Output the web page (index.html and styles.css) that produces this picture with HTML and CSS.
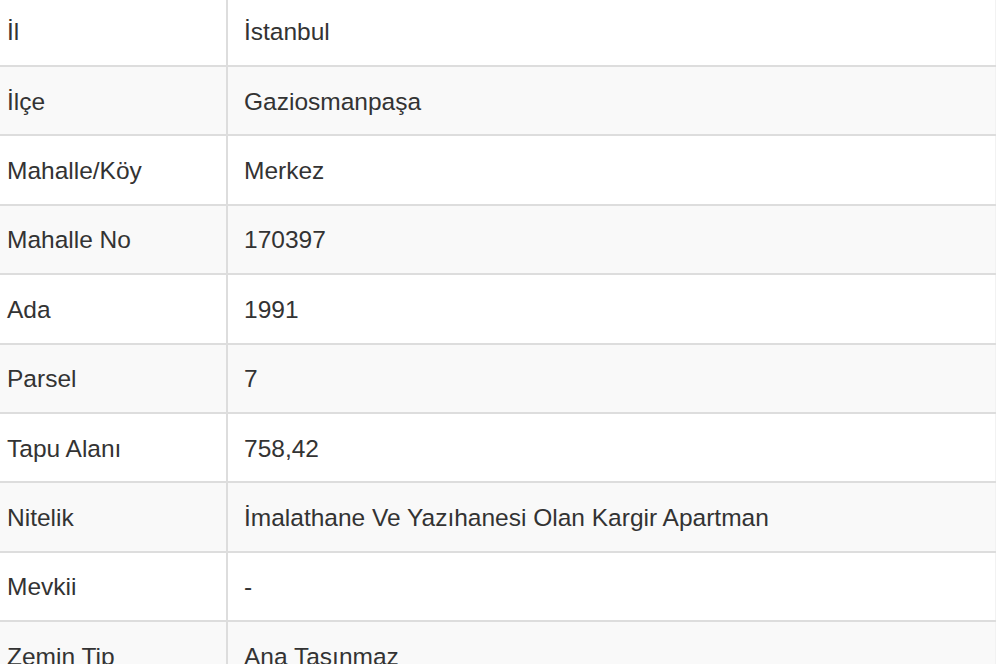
FILE: index.html
```html
<!DOCTYPE html>
<html lang="tr">
<head>
<meta charset="utf-8">
<link rel="stylesheet" href="styles.css">
</head>
<body>
<table class="info">
  <tbody>
    <tr><td class="key">İl</td><td class="val">İstanbul</td></tr>
    <tr><td class="key">İlçe</td><td class="val">Gaziosmanpaşa</td></tr>
    <tr><td class="key">Mahalle/Köy</td><td class="val">Merkez</td></tr>
    <tr><td class="key">Mahalle No</td><td class="val">170397</td></tr>
    <tr><td class="key">Ada</td><td class="val">1991</td></tr>
    <tr><td class="key">Parsel</td><td class="val">7</td></tr>
    <tr><td class="key">Tapu Alanı</td><td class="val">758,42</td></tr>
    <tr><td class="key">Nitelik</td><td class="val">İmalathane Ve Yazıhanesi Olan Kargir Apartman</td></tr>
    <tr><td class="key">Mevkii</td><td class="val">-</td></tr>
    <tr><td class="key">Zemin Tip</td><td class="val">Ana Taşınmaz</td></tr>
  </tbody>
</table>
</body>
</html>
```
FILE: styles.css
```css
html, body {
  margin: 0;
  padding: 0;
  background: #fff;
  overflow: hidden;
}
.info {
  width: 996px;
  border-collapse: collapse;
  margin-top: -4.4px;
  font-family: "Liberation Sans", Arial, sans-serif;
  font-size: 24.5px;
  color: #333;
}
.info tr {
  height: 69.4px;
}
.info tr:nth-child(even) {
  background: #f9f9f9;
}
.info td {
  border-top: 2px solid #dddddd;
  border-bottom: 2px solid #dddddd;
  padding: 0;
  vertical-align: middle;
  line-height: 28px;
}
.info .key {
  width: 219px;
  padding-left: 7px;
  border-right: 2px solid #dddddd;
}
.info .val {
  padding-left: 16px;
  padding-top: 2px;
  border-right: 1px solid #f2f2f2;
}
.info .key {
  padding-top: 2px;
}
```
